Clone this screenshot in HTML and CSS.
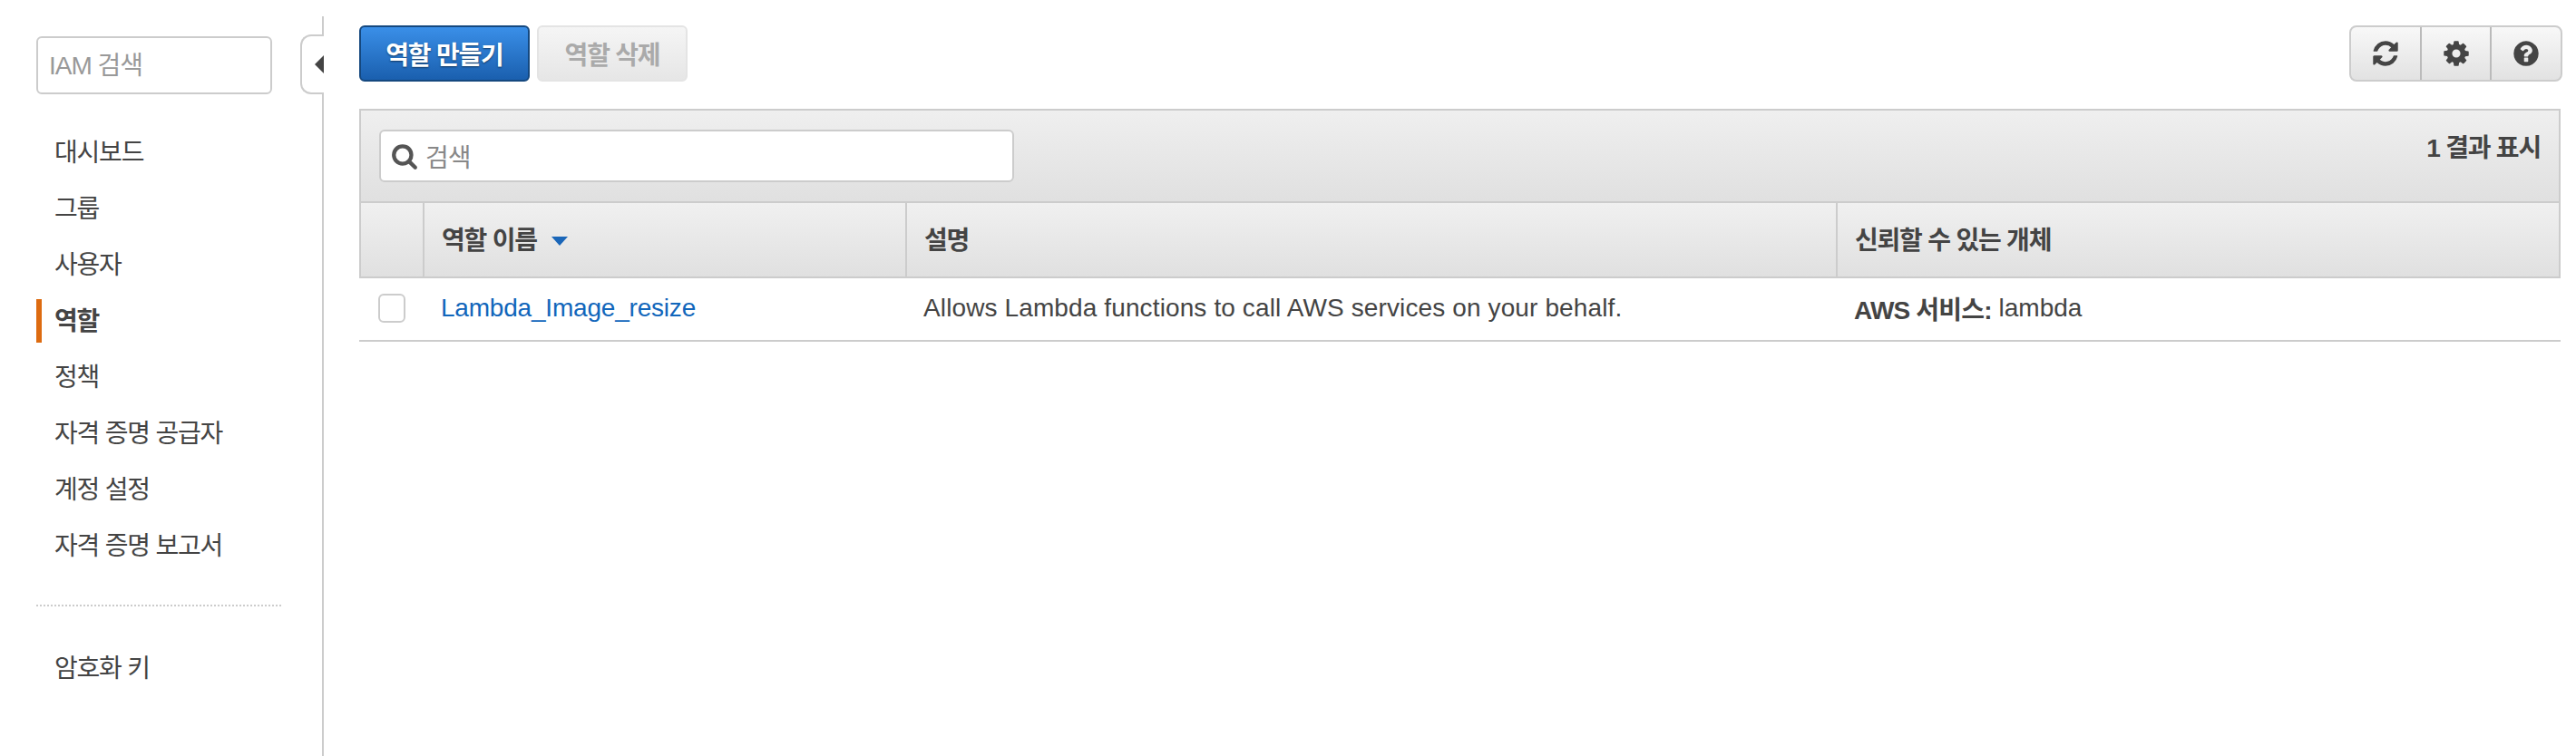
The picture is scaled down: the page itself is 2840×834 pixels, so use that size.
FILE: index.html
```html
<!DOCTYPE html>
<html lang="ko">
<head>
    <meta charset="UTF-8">
    <title>IAM 역할</title>
    <link rel="stylesheet" href="styles.css">
</head>
<body>
    <div class="sidebar">
        <div class="side-search">IAM 검색</div>
        <div class="collapse-tab"><span class="collapse-arrow"></span></div>
        <div class="nav">
            <div class="nav-item">대시보드</div>
            <div class="nav-item">그룹</div>
            <div class="nav-item">사용자</div>
            <div class="nav-item active">역할</div>
            <div class="nav-item">정책</div>
            <div class="nav-item">자격 증명 공급자</div>
            <div class="nav-item">계정 설정</div>
            <div class="nav-item">자격 증명 보고서</div>
        </div>
        <div class="nav-divider"></div>
        <div class="nav nav-extra">
            <div class="nav-item">암호화 키</div>
        </div>
    </div>

    <div class="main">
        <div class="toolbar">
            <div class="btn btn-primary">역할 만들기</div>
            <div class="btn btn-disabled">역할 삭제</div>
            <div class="tool-group">
                <div class="tool-btn">
                    <svg class="tool-icon" viewBox="0 0 1792 1792"><path d="M1639 1056q0 5-1 7-64 268-268 434.5t-478 166.5q-146 0-282.5-55t-243.5-157l-129 129q-19 19-45 19t-45-19-19-45v-448q0-26 19-45t45-19h448q26 0 45 19t19 45-19 45l-137 137q71 66 161 102t187 36q134 0 250-65t186-179q11-17 53-117 8-23 30-23h192q13 0 22.5 9.5t9.5 22.5zm25-800v448q0 26-19 45t-45 19h-448q-26 0-45-19t-19-45 19-45l138-138q-148-137-349-137-134 0-250 65t-186 179q-11 17-53 117-8 23-30 23h-199q-13 0-22.5-9.5t-9.5-22.5v-7q65-268 270-434.5t480-166.5q146 0 284 55.5t245 156.5l130-129q19-19 45-19t45 19 19 45z"/></svg>
                </div>
                <div class="tool-btn">
                    <svg class="tool-icon" viewBox="0 0 1792 1792"><path d="M1152 896q0-106-75-181t-181-75-181 75-75 181 75 181 181 75 181-75 75-181zm512-109v222q0 12-8 23t-20 13l-185 28q-19 54-39 91 35 50 107 138 10 12 10 25t-9 23q-27 37-99 108t-94 71q-12 0-26-9l-138-108q-44 23-91 38-16 136-29 186-7 28-36 28h-222q-14 0-24.5-8.5t-11.5-21.5l-28-184q-49-16-90-37l-141 107q-10 9-25 9-14 0-25-11-126-114-165-168-7-10-7-23 0-12 8-23 15-21 51-66.5t54-70.5q-27-50-41-99l-183-27q-13-2-21-12.5t-8-23.5v-222q0-12 8-23t19-13l186-28q14-46 39-92-40-57-107-138-10-12-10-24 0-10 9-23 26-36 98.5-107.5t94.5-71.5q13 0 26 10l138 107q44-23 91-38 16-136 29-186 7-28 36-28h222q14 0 24.5 8.5t11.5 21.5l28 184q49 16 90 37l142-107q9-9 24-9 13 0 25 10 129 119 165 170 7 8 7 22 0 12-8 23-15 21-51 66.5t-54 70.5q26 50 41 98l183 28q13 2 21 12.5t8 23.5z"/></svg>
                </div>
                <div class="tool-btn">
                    <svg class="tool-icon" viewBox="0 0 1792 1792"><path d="M1024 1376v-192q0-14-9-23t-23-9h-192q-14 0-23 9t-9 23v192q0 14 9 23t23 9h192q14 0 23-9t9-23zm256-672q0-88-55.5-163t-138.5-116-170-41q-243 0-371 213-15 24 8 42l132 100q7 6 19 6 16 0 25-12 53-68 86-92 34-24 86-24 48 0 85.5 26t37.5 59q0 38-20 61t-68 45q-63 28-115.5 86.5t-52.5 125.5v36q0 14 9 23t23 9h192q14 0 23-9t9-23q0-19 21.5-49.5t54.5-49.5q32-18 49-28.5t46-35 44.5-48 28-60.5 12.5-81zm384 192q0 209-103 385.5t-279.5 279.5-385.5 103-385.5-103-279.5-279.5-103-385.5 103-385.5 279.5-279.5 385.5-103 385.5 103 279.5 279.5 103 385.5z"/></svg>
                </div>
            </div>
        </div>

        <div class="table-box">
            <div class="filter-bar">
                <div class="filter-input">
                    <svg class="search-icon" viewBox="0 0 1792 1792"><path d="M1216 832q0-185-131.5-316.5t-316.5-131.5-316.5 131.5-131.5 316.5 131.5 316.5 316.5 131.5 316.5-131.5 131.5-316.5zm512 832q0 52-38 90t-90 38q-54 0-90-38l-343-342q-179 124-399 124-143 0-273.5-55.5t-225-150-150-225-55.5-273.5 55.5-273.5 150-225 225-150 273.5-55.5 273.5 55.5 225 150 150 225 55.5 273.5q0 220-124 399l343 343q37 37 37 90z"/></svg>
                    <span class="filter-text">검색</span>
                </div>
                <div class="result-count">1 결과 표시</div>
            </div>
            <div class="table-head">
                <div class="head-cell"></div>
                <div class="head-cell">역할 이름<span class="sort-arrow"></span></div>
                <div class="head-cell">설명</div>
                <div class="head-cell">신뢰할 수 있는 개체</div>
            </div>
            <div class="table-row">
                <div class="cell cell-check"><span class="checkbox"></span></div>
                <div class="cell link">Lambda_Image_resize</div>
                <div class="cell desc">Allows Lambda functions to call AWS services on your behalf.</div>
                <div class="cell"><strong>AWS 서비스:</strong>&nbsp;lambda</div>
            </div>
        </div>
    </div>
</body>
</html>
```

FILE: styles.css
```css
html, body {
    height: 100%;
}

body {
    margin: 0;
    display: flex;
    overflow: hidden;
    background-color: #fff;
    color: #444;
    font-family: "Liberation Sans", "Noto Sans CJK KR", sans-serif;
    font-size: 28px;
}

/* 왼쪽 메뉴 */
.sidebar {
    position: relative;
    box-sizing: border-box;
    width: 357px;
    height: calc(100% - 18px);
    margin-top: 18px;
    padding: 22px 0 0 40px;
    border-right: 2px solid #ccc;
    flex-shrink: 0;
}

.side-search {
    box-sizing: border-box;
    width: 260px;
    height: 64px;
    padding: 2px 12px 0;
    line-height: 58px;
    border: 2px solid #ccc;
    border-radius: 6px;
    color: #999;
    letter-spacing: -1px;
}

.collapse-tab {
    position: absolute;
    top: 20px;
    right: -2px;
    box-sizing: border-box;
    width: 26px;
    height: 66px;
    display: flex;
    align-items: center;
    justify-content: flex-end;
    background-color: #fff;
    border: 2px solid #ccc;
    border-right: 0;
    border-radius: 12px 0 0 12px;
}

.collapse-arrow {
    border-style: solid;
    border-width: 10px 10px 10px 0;
    border-color: transparent #444 transparent transparent;
}

.nav {
    margin-top: 40px;
    display: flex;
    flex-direction: column;
    gap: 14px;
}

.nav-extra {
    margin-top: 46px;
}

.nav-item {
    box-sizing: border-box;
    height: 48px;
    padding: 0 0 4px 14px;
    display: flex;
    align-items: center;
    border-left: 6px solid transparent;
    letter-spacing: -1.2px;
}

.nav-item.active {
    border-left-color: #dd6b10;
    font-weight: bold;
}

.nav-divider {
    width: 270px;
    margin-top: 41px;
    margin-bottom: -2px;
    border-top: 2px dotted #ccc;
}

/* 본문 */
.main {
    flex: 1;
    padding: 28px 15px 0 39px;
    min-width: 0;
}

.toolbar {
    display: flex;
    gap: 8px;
    height: 62px;
}

.btn {
    box-sizing: border-box;
    height: 62px;
    display: flex;
    align-items: center;
    justify-content: center;
    border-radius: 6px;
    font-weight: bold;
    letter-spacing: -1.2px;
}

.btn-primary {
    width: 188px;
    background: linear-gradient(#3a8fe8, #1a5fae);
    border: 2px solid #15487f;
    color: #fff;
    text-shadow: 0 1px 2px rgba(0, 0, 0, 0.5);
}

.btn-disabled {
    width: 166px;
    background: linear-gradient(#f5f5f5, #e6e6e6);
    border: 2px solid #e4e4e4;
    color: #aaa;
}

.tool-group {
    margin-left: auto;
    display: flex;
    box-sizing: border-box;
    width: 235px;
    height: 62px;
    background: linear-gradient(#f8f8f8, #e2e2e2);
    border: 2px solid #ccc;
    border-radius: 8px;
}

.tool-btn {
    flex: 1;
    display: flex;
    align-items: center;
    justify-content: center;
    border-right: 2px solid #bbb;
}

.tool-btn:last-child {
    border-right: 0;
}

.tool-icon {
    width: 32px;
    height: 32px;
    fill: #444;
}

.table-box {
    margin: 30px 2px 0 0;
}

.filter-bar {
    box-sizing: border-box;
    height: 102px;
    padding: 21px 20px 0 20px;
    display: flex;
    justify-content: space-between;
    background: linear-gradient(#efefef, #e0e0e0);
    border: 2px solid #ccc;
    border-bottom: 0;
}

.filter-input {
    box-sizing: border-box;
    width: 700px;
    height: 58px;
    padding-left: 11px;
    display: flex;
    align-items: center;
    background-color: #fff;
    border: 2px solid #ccc;
    border-radius: 6px;
}

.search-icon {
    width: 30px;
    height: 30px;
    fill: #555;
}

.filter-text {
    margin-left: 8px;
    color: #888;
    letter-spacing: -1px;
}

.result-count {
    margin-top: -2px;
    font-weight: bold;
    letter-spacing: -1.2px;
}

.table-head {
    display: grid;
    grid-template-columns: 68px 532px 1026px 1fr;
    box-sizing: border-box;
    height: 85px;
    background: linear-gradient(#f0f0f0, #e0e0e0);
    border: 2px solid #ccc;
}

.table-row {
    display: grid;
    grid-template-columns: 71px 532px 1026px 1fr;
    box-sizing: border-box;
    height: 70px;
    border-bottom: 2px solid #ccc;
}

.head-cell {
    padding: 0 0 3px 19px;
    display: flex;
    align-items: center;
    border-left: 2px solid #ccc;
    font-weight: bold;
    letter-spacing: -1.2px;
}

.head-cell:first-child {
    border-left: 0;
}

.sort-arrow {
    margin: 6px 0 0 16px;
    border-style: solid;
    border-width: 10px 9px 0 9px;
    border-color: #1a66b8 transparent transparent transparent;
}

.cell {
    padding: 0 0 2px 19px;
    display: flex;
    align-items: center;
}

.cell-check {
    padding-left: 21px;
}

.cell strong {
    letter-spacing: -0.8px;
}

.desc {
    letter-spacing: 0.12px;
}

.link {
    color: #1166bb;
    letter-spacing: -0.2px;
}

.checkbox {
    box-sizing: border-box;
    width: 30px;
    height: 32px;
    background-color: #fff;
    border: 2px solid #ccc;
    border-radius: 6px;
}
```
